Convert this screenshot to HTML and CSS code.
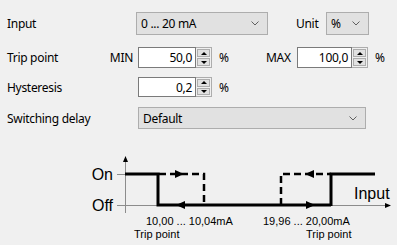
FILE: index.html
```html
<!DOCTYPE html>
<html>
<head>
<meta charset="utf-8">
<link rel="stylesheet" href="styles.css">
</head>
<body>
<div class="form">
  <div class="row r1">
    <span class="label">Input</span>
    <div class="select w-input"><span>0 ... 20 mA</span><svg class="chev" width="8" height="5" viewBox="0 0 8 5"><path d="M0.5 0.5 L4 4 L7.5 0.5" fill="none" stroke="#606060" stroke-width="1"/></svg></div>
    <span class="unit-label">Unit</span>
    <div class="select w-unit"><span>%</span><svg class="chev" width="8" height="5" viewBox="0 0 8 5"><path d="M0.5 0.5 L4 4 L7.5 0.5" fill="none" stroke="#606060" stroke-width="1"/></svg></div>
  </div>
  <div class="row r2">
    <span class="label split"><span>Trip point</span><span>MIN</span></span>
    <div class="spin w-min"><div class="box">50,0</div><div class="btns"><div class="btn"><i class="up"></i></div><div class="btn"><i class="down"></i></div></div></div>
    <span class="pct pct-gap">%</span>
    <span class="max-label">MAX</span>
    <div class="spin w-max"><div class="box">100,0</div><div class="btns"><div class="btn"><i class="up"></i></div><div class="btn"><i class="down"></i></div></div></div>
    <span class="pct">%</span>
  </div>
  <div class="row r3">
    <span class="label">Hysteresis</span>
    <div class="spin w-min"><div class="box">0,2</div><div class="btns"><div class="btn"><i class="up"></i></div><div class="btn"><i class="down"></i></div></div></div>
    <span class="pct">%</span>
  </div>
  <div class="row r4">
    <span class="label">Switching delay</span>
    <div class="select w-delay"><span>Default</span><svg class="chev" width="8" height="5" viewBox="0 0 8 5"><path d="M0.5 0.5 L4 4 L7.5 0.5" fill="none" stroke="#606060" stroke-width="1"/></svg></div>
  </div>
</div>
<div class="chart-wrap">
<svg class="chart" width="397" height="95" viewBox="0 0 397 95">
  <line x1="125.5" y1="10" x2="125.5" y2="63" stroke="#8c8c8c" stroke-width="1"/>
  <path d="M125.5 6 L128 12 L123 12 Z" fill="#000"/>
  <line x1="117" y1="24.5" x2="125" y2="24.5" stroke="#8c8c8c" stroke-width="1"/>
  <line x1="117" y1="55.5" x2="387" y2="55.5" stroke="#8c8c8c" stroke-width="1"/>
  <path d="M391 55.5 L385 53 L385 58 Z" fill="#000"/>
  <path d="M125 24 H158 V55 H331 M331 56 V24 H375" fill="none" stroke="#000" stroke-width="3"/>
  <path d="M159 24 H204 V55" fill="none" stroke="#000" stroke-width="2.5" stroke-dasharray="7 4"/>
  <path d="M281 55 V24 H331" fill="none" stroke="#000" stroke-width="2.5" stroke-dasharray="7 4"/>
  <path d="M184 24 L175 20 L175 28 Z" fill="#000"/>
  <path d="M176 55 L185 51 L185 59 Z" fill="#000"/>
  <path d="M305 24 L314 20 L314 28 Z" fill="#000"/>
  <path d="M315 55 L306 51 L306 59 Z" fill="#000"/>
  <text class="big" x="113" y="29.5" text-anchor="end">On</text>
  <text class="big" x="113" y="61" text-anchor="end">Off</text>
  <text class="big" x="354" y="49">Input</text>
</svg>
<div class="tp tp-left"><div class="rng">10,00 ... 10,04mA</div><div>Trip point</div></div>
<div class="tp tp-right"><div class="rng">19,96 ... 20,00mA</div><div class="tp2">Trip point</div></div>
</div>
</body>
</html>
```
FILE: styles.css
```css
html, body {
  margin: 0;
  padding: 0;
  background: #f0f0f0;
}
body {
  width: 397px;
  height: 245px;
  overflow: hidden;
  font-family: "Noto Sans", "Liberation Sans", sans-serif;
  font-size: 12px;
  letter-spacing: -0.3px;
  color: #000;
}
.form {
  padding: 12px 0 0 7px;
}
.row {
  display: flex;
  align-items: center;
}
.r1 { height: 23px; }
.r2 { height: 21px; margin-top: 12px; }
.r3 { height: 20px; margin-top: 9px; }
.r4 { height: 22px; margin-top: 10px; }
.label {
  width: 131px;
  flex: none;
}
.r1 .label { width: 129px; }
.split {
  display: flex;
  justify-content: space-between;
  width: 126px;
  margin-right: 5px;
}
.select {
  box-sizing: border-box;
  height: 100%;
  background: #e1e1e1;
  border: 1px solid #adadad;
  display: flex;
  align-items: center;
  justify-content: space-between;
  padding: 0 8px 0 4px;
  flex: none;
}
.w-input { width: 132px; }
.w-unit { width: 43px; }
.w-delay { width: 228px; }
.unit-label { margin-left: 28px; width: 30px; flex: none; }
.chev { flex: none; }
.spin {
  display: flex;
  height: 100%;
  flex: none;
}
.w-min { width: 74px; }
.w-max { width: 71px; }
.box {
  box-sizing: border-box;
  flex: 1;
  background: #fff;
  border: 1px solid #7a7a7a;
  padding: 0 3px;
  display: flex;
  align-items: center;
  justify-content: flex-end;
}
.btns {
  box-sizing: border-box;
  width: 16px;
  display: flex;
  flex-direction: column;
  border: 1px solid #adadad;
  border-left: none;
  padding: 1px;
  gap: 1px;
}
.btn {
  flex: 1;
  background: #e1e1e1;
  border: 1px solid #adadad;
  display: flex;
  align-items: center;
  justify-content: center;
}
.btn i {
  width: 0;
  height: 0;
  border-left: 3px solid transparent;
  border-right: 3px solid transparent;
}
.btn .up { border-bottom: 3px solid #000; }
.btn .down { border-top: 3px solid #000; }
.pct { margin-left: 7px; flex: none; }
.pct-gap { width: 47px; }
.max-label { width: 31px; flex: none; }
.chart-wrap {
  position: relative;
  margin-top: 21px;
  height: 95px;
}
.chart {
  display: block;
}
.chart .big {
  font-family: "Liberation Sans", Arial, sans-serif;
  font-size: 16px;
  letter-spacing: 0;
}
.tp {
  position: absolute;
  top: 65px;
  font-family: "Liberation Sans", Arial, sans-serif;
  font-size: 11px;
  line-height: 13px;
  letter-spacing: 0;
  white-space: nowrap;
}
.tp-left { left: 134px; }
.tp-left .rng { margin-left: 12px; }
.tp-right { left: 263px; }
.tp-right .tp2 { margin-left: 43px; }
```
